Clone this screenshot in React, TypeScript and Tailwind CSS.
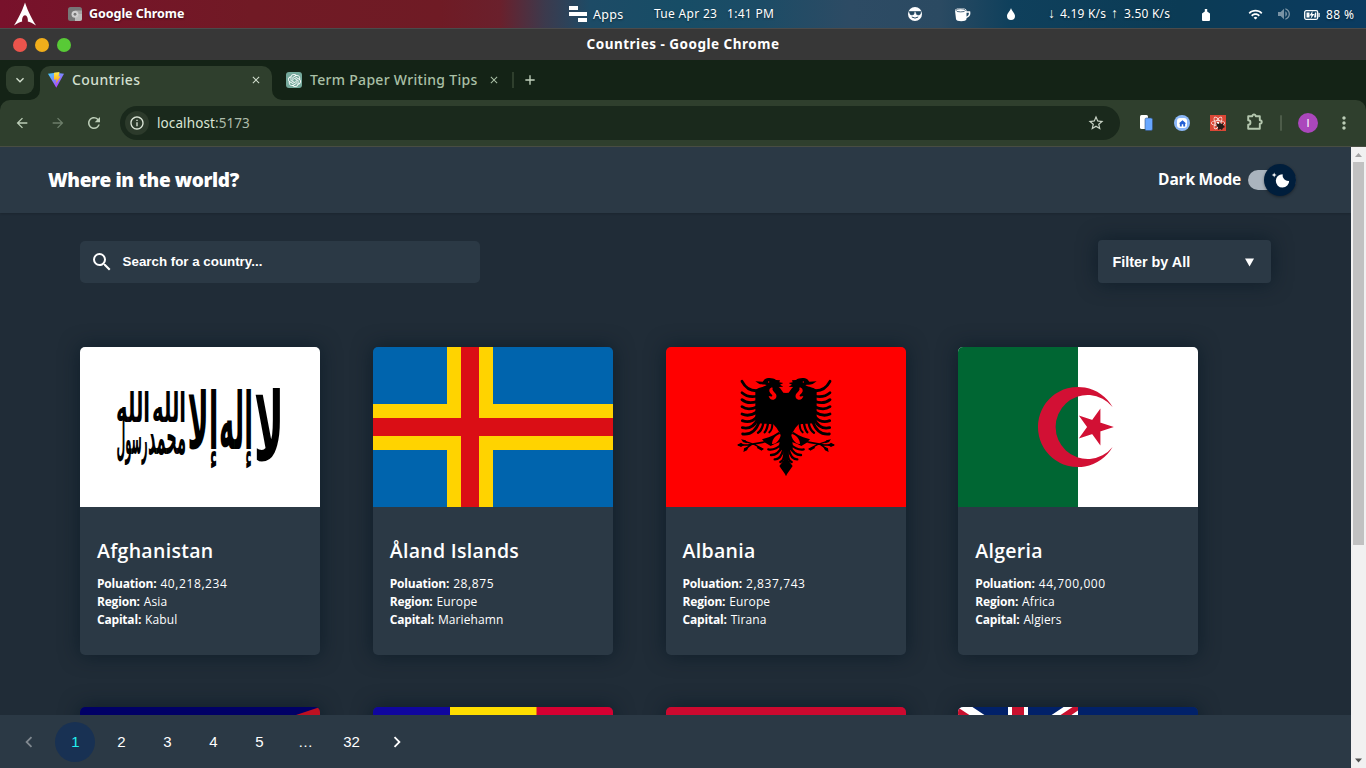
import type { ReactNode } from "react";
import {
  MdArrowBack,
  MdArrowForward,
  MdRefresh,
  MdStarBorder,
  MdMoreVert,
  MdSearch,
  MdNavigateBefore,
  MdNavigateNext,
  MdOutlineInfo,
  MdClose,
  MdAdd,
  MdKeyboardArrowDown,
  MdVolumeUp,
  MdWifi,
  MdHome,
} from "react-icons/md";
import { SiOpenai, SiReact } from "react-icons/si";

const ui = "font-['Noto_Sans',sans-serif]";
const nunito = "font-['Open_Sans',sans-serif]";

function SystemBar() {
  return (
    <div
      className={`${ui} flex h-7 shrink-0 items-center whitespace-nowrap bg-[linear-gradient(90deg,#78112b_0px,#711a25_250px,#6f1b25_440px,#6a202c_500px,#3c3a4d_545px,#1d4b66_590px,#174d66_680px,#1c4c66_760px,#2d4b64_850px,#2b4a62_940px,#0f405c_1010px,#0b3b55_1180px,#0b3b60_1366px)] text-[12.5px] text-white [text-shadow:0_1px_2px_rgba(0,0,0,0.5)]`}
    >
      <svg className="ml-[13px] h-6 w-6" viewBox="0 0 24 24" fill="#fff">
        <path d="M12 .5c-1.6 5-5 13.500-11 23 3.500-2.200 6-3.700 8.200-4.100-.4-3 .8-6.200 2.800-6.200s3.200 3.200 2.800 6.200c2.200.4 4.700 1.900 8.200 4.100C17 14 13.600 5.500 12 .5z" />
      </svg>
      <svg className="ml-[31px] h-[14px] w-[14px]" viewBox="0 0 14 14">
        <rect width="14" height="14" rx="2.500" fill="#777" />
        <path d="M7 7h7v4.500a2.500 2.500 0 0 1-2.500 2.500H7z" fill="#bbb" />
        <path d="M7 3.500h7V7H9z" fill="#a5a5a5" />
        <circle cx="7" cy="7.200" r="3.500" fill="#ccc" />
        <circle cx="7" cy="7.200" r="2" fill="#777" stroke="#eee" strokeWidth=".7" />
      </svg>
      <span className="ml-[7px] w-[480px] pt-px text-[12.500px] font-bold tracking-[-0.05px]">Google Chrome</span>
      <svg className="h-4 w-[18px]" viewBox="0 0 18 16" fill="#fff">
        <path d="M0 0h9v4H0zM0 6h18v4H0zM9 12h9v4H9z" />
      </svg>
      <span className="ml-[6px] w-[61px] pt-[2px] tracking-[0.3px]">Apps</span>
      <span className="w-[73px] text-[12px] tracking-[0.3px]">Tue Apr 23</span>
      <span className="w-[181px] text-[12px] tracking-[0.3px]">1:41 PM</span>
      <svg className="h-[14px] w-[14px]" viewBox="0 0 14 14">
        <circle cx="7" cy="7" r="7" fill="#fff" />
        <path d="M.5 4.500h13M1.500 5h4.600v1.200a2 1.600 0 0 1-4.300 0zM7.900 5h4.600v1.200a2 1.600 0 0 1-4.300 0z" fill="#244760" stroke="#244760" strokeWidth=".7" />
        <path d="M3.800 10q3.200 2.200 6.400 0" stroke="#244760" fill="none" />
      </svg>
      <svg className="ml-[32px] mt-px h-[15px] w-[17px]" viewBox="0 0 17 15">
        <path d="M1 3.500C1 0 12.500 0 12.500 3.500V12c0 3-10.500 3-10.500 0z" fill="#fff" />
        <ellipse cx="6.700" cy="3.300" rx="4.700" ry="1.600" fill="#fff" stroke="#24455e" strokeWidth=".8" />
        <path d="M12 5h3.500q.8 4-3.500 5.500" fill="none" stroke="#fff" strokeWidth="1.500" />
      </svg>
      <svg className="ml-[36px] h-3 w-2" viewBox="0 0 8 12">
        <path d="M4 0C4.500 3 8 5 8 8a4 4 0 0 1-8 0C0 5 3.500 3 4 0z" fill="#fff" />
      </svg>
      <span className="ml-[33px] flex w-[154px] text-[12px]">
        <span className="w-[12px] text-[14px] leading-4">↓</span>
        <span className="w-[51px] tracking-[0.2px]">4.19 K/s</span>
        <span className="w-[13px] text-[14px] leading-4">↑</span>
        <span className="tracking-[0.2px]">3.50 K/s</span>
      </span>
      <svg className="mt-px h-3 w-2" viewBox="0 0 8 12">
        <path d="M2.800 0h2.400v2.500L8 4.500V11q0 1-1 1H1q-1 0-1-1V4.500l2.800-2z" fill="#fff" />
      </svg>
      <MdWifi className="ml-[38px] mt-px h-[15px] w-[15px]" />
      <MdVolumeUp className="ml-[13px] h-4 w-4 opacity-45" />
      <svg className="ml-[12px] mt-px h-3 w-4" viewBox="0 0 16 12">
        <rect x=".7" y="1.700" width="13" height="8.600" rx="1.500" fill="none" stroke="#fff" strokeWidth="1.300" />
        <path d="M14.500 4h1.200v4h-1.200zM2.500 3.500h3v5h-3zM8.500 2 5.500 6.500h2L6.500 10l4-5H8.300zM11 3.500h1.300v5H10z" fill="#fff" />
      </svg>
      <span className="ml-[6px] pt-px text-[12px] tracking-[0.4px]">88 %</span>
    </div>
  );
}

function TitleBar() {
  return (
    <div className={`${ui} grid h-8 shrink-0 grid-cols-[1fr_auto_1fr] items-center border-t border-[#4b4b4b] bg-[#373737] px-[13px] text-white`}>
      <div className="flex gap-2">
        <span className="h-[14px] w-[14px] rounded-full bg-[#ec544c]" />
        <span className="h-[14px] w-[14px] rounded-full bg-[#f1ae1b]" />
        <span className="h-[14px] w-[14px] rounded-full bg-[#58ca36]" />
      </div>
      <span className="text-[13.500px] font-bold tracking-[0.5px]">Countries - Google Chrome</span>
      <span />
    </div>
  );
}

function TabStrip() {
  return (
    <div className={`${ui} flex h-10 shrink-0 bg-[#142316] text-[14px] font-medium text-[#d2dfce]`}>
      <div className="ml-[6px] mt-[6px] flex h-7 w-7 items-center justify-center rounded-[9px] bg-[#2f3f2d]">
        <MdKeyboardArrowDown className="h-4 w-4" />
      </div>
      <svg className="ml-[-4px] mt-[30px] h-[10px] w-[10px]" viewBox="0 0 10 10">
        <path d="M0 10A10 10 0 0 0 10 0v10z" fill="#2f3f2d" />
      </svg>
      <div className="mt-[6px] flex h-[34px] w-[232px] items-start rounded-t-[10px] bg-[#2f3f2d] pl-2 pr-[10px] pt-[6px]">
        <svg className="h-4 w-4" viewBox="0 0 16 16">
          <defs>
            <linearGradient id="viteV" x1="0" y1="0" x2=".7" y2="1">
              <stop stopColor="#41d1ff" />
              <stop offset="1" stopColor="#bd34fe" />
            </linearGradient>
            <linearGradient id="viteBolt" x1="0" y1="0" x2="0" y2="1">
              <stop stopColor="#ffea4f" />
              <stop offset="1" stopColor="#ff9c00" />
            </linearGradient>
          </defs>
          <path d="M0 1.800 8 .8l8 1L8.300 15.800z" fill="url(#viteV)" />
          <path d="m6 .8 5.500-.8-1 4.500 2-.3L8 11.500l.7-4.300-2.700.6z" fill="url(#viteBolt)" />
        </svg>
        <span className="ml-2 grow leading-4 tracking-[0.4px]">Countries</span>
        <MdClose className="mt-[2px] h-3 w-3" />
      </div>
      <svg className="mt-[30px] h-[10px] w-[10px]" viewBox="0 0 10 10">
        <path d="M0 0v10h10A10 10 0 0 1 0 0z" fill="#2f3f2d" />
      </svg>
      <div className="ml-1 mt-3 flex h-4 w-[229px] text-[#aac0a6]">
        <span className="flex h-4 w-4 items-center justify-center rounded-[3px] bg-[#75a99c] text-white">
          <SiOpenai className="h-[13px] w-[13px]" />
        </span>
        <span className="ml-2 w-[178px] whitespace-nowrap leading-4 tracking-[0.3px]">Term Paper Writing Tips</span>
        <MdClose className="mt-[2px] h-3 w-3" />
        <span className="ml-3 h-4 w-[2px] shrink-0 bg-[#2f3f2d]" />
      </div>
      <MdAdd className="ml-[7px] mt-[12px] h-4 w-4 text-[#c2d2be]" />
    </div>
  );
}

function Toolbar() {
  return (
    <div className="shrink-0 bg-[#142316]">
      <div className={`${ui} flex h-[47px] items-start rounded-t-[10px] border-b border-[#494e43] bg-[#2f3f2d] pt-[6px] text-[#bccdb7]`}>
        <MdArrowBack className="ml-[14px] mt-[9px] h-4 w-4" />
        <MdArrowForward className="ml-5 mt-[9px] h-4 w-4 text-[#6d7e6a]" />
        <MdRefresh className="ml-[19px] mt-[8px] h-[18px] w-[18px]" />
        <div className="ml-[17px] flex h-[34px] w-[1000px] items-center rounded-full bg-[#1a291c] pl-[5px] pr-[15px]">
          <span className="flex h-6 w-6 items-center justify-center rounded-full bg-[#2c3a2b] text-[#dce6d8]">
            <MdOutlineInfo className="h-4 w-4" />
          </span>
          <span className="ml-2 grow text-[13.500px] tracking-[0.1px] text-[#d9e5d5]">
            localhost<span className="text-[#aebcaa]">:5173</span>
          </span>
          <MdStarBorder className="h-[18px] w-[18px] text-[#cad5c7]" />
        </div>
        <svg className="ml-[19px] mt-[9px] h-4 w-4" viewBox="0 0 16 16">
          <rect x="1" y="0" width="8" height="14" rx="1.500" fill="#fff" />
          <rect x="6" y="3" width="7.500" height="12.500" rx="1.500" fill="#67a7ff" stroke="#34507d" strokeWidth=".6" />
        </svg>
        <span className="ml-[19px] mt-[9px] flex h-4 w-4 items-center justify-center rounded-full border-[3px] border-dotted border-[#8cb8f8] bg-[#8cb8f8]">
          <span className="flex h-[10px] w-[10px] shrink-0 items-center justify-center rounded-[3px] bg-white text-[#2360d5]">
            <MdHome className="h-[9px] w-[9px]" />
          </span>
        </span>
        <span className="relative ml-5 mt-[9px] flex h-4 w-4 items-center justify-center bg-[#db4736] text-white">
          <SiReact className="h-[14px] w-[14px]" />
          <svg className="absolute left-[6px] top-[6px] h-[9px] w-[9px]" viewBox="0 0 9 9">
            <path d="M0 2l3 1 1-2 1 2 3-1-1 2 2 2-2 1-1 2-2-1-2 1V6L0 5l1-1z" fill="#251b18" />
          </svg>
        </span>
        <svg className="ml-[19px] mt-[6px] h-5 w-5" viewBox="0 0 20 20" fill="none" stroke="#b4c7ae" strokeWidth="1.900">
          <path d="M3.200 4.200h4.100c-.2-2.200 3.600-2.200 3.400 0h4.100v4c2.600-.1 2.600 3.700 0 3.600v5H3.200v-4c3-.1 3-4.500 0-4.600z" strokeLinejoin="round" />
        </svg>
        <span className="ml-[15px] mt-[9px] h-4 w-[2px] rounded bg-[#4d5c49]" />
        <span className="ml-[16px] mt-[7px] flex h-5 w-5 items-center justify-center rounded-full bg-[#ab47bc] font-['Liberation_Sans',sans-serif] text-[11px] text-white">I</span>
        <MdMoreVert className="ml-[16px] mt-[7px] h-5 w-5" />
      </div>
    </div>
  );
}

type Brush = { word: string; x: number; y: number; width: number; size: number; stretch: number };

const calligraphy: Brush[] = [
  { word: "لا", x: 189, y: 113, width: 30, size: 28, stretch: 3.4 },
  { word: "إله", x: 156, y: 102, width: 34, size: 28, stretch: 2.8 },
  { word: "إلا", x: 123, y: 102, width: 31, size: 28, stretch: 2.8 },
  { word: "الله", x: 89, y: 75, width: 34, size: 23, stretch: 1.8 },
  { word: "محمد", x: 87, y: 107, width: 38, size: 27, stretch: 1.8 },
  { word: "رسول", x: 52, y: 107, width: 31, size: 25, stretch: 1.8 },
  { word: "الله", x: 53, y: 75, width: 34, size: 23, stretch: 1.8 },
];

function AfghanFlag() {
  return (
    <svg className="h-40 w-60" viewBox="0 0 240 160">
      <rect width="240" height="160" fill="#fff" />
      {calligraphy.map(({ word, x, y, width, size, stretch }, i) => (
        <g key={i} transform={`translate(${x} ${y}) scale(1 ${stretch})`}>
          <text
            textAnchor="middle"
            direction="rtl"
            fontFamily="'DejaVu Sans', sans-serif"
            fontSize={size}
            fontWeight="bold"
            textLength={width}
            lengthAdjust="spacingAndGlyphs"
          >
            {word}
          </text>
        </g>
      ))}
    </svg>
  );
}

function AlandFlag() {
  return (
    <svg className="h-40 w-60" viewBox="0 0 240 160">
      <rect width="240" height="160" fill="#0064ad" />
      <path d="M74 0h46v57h120v46H120v57H74v-57H0V57h74z" fill="#ffd300" />
      <path d="M88 0h18v71h134v18H106v71H88V89H0V71h88z" fill="#da0e15" />
    </svg>
  );
}

function EagleHalf() {
  return (
    <g>
      <path
        d="M199 99L190 98 180 84 176 81 190 80 180 74 190 69 178 67 180 61 168 60C160 53 142 52 134 58L128 65 106 64 118 72C126 75 134 73 140 75C136 80 120 81 112 86L106 90V180L112 190 160 193 170 204 182 224C180 240 176 256 178 266L190 272 192 300 178 318 199 348z"
        fill="#000"
      />
      <path d="M126 238L146 232 160 226 176 216 186 228 180 246 164 252 152 258 136 248z" fill="#000" />
      <path d="M180 222C168 224 156 238 156 252C168 254 180 238 182 226z" fill="#f00" />
      <path d="M156 82C150 84 147 89 148 94C150 101 158 104 157 108C155 111 150 109 146 108C148 116 154 121 161 119C169 117 171 109 168 103C164 96 155 92 158 84z" fill="#f00" />
      <circle cx="146" cy="66" r="2" fill="#f00" />
      <g fill="none" stroke="#000" strokeLinecap="round" strokeWidth="8.500">
        <path d="M112 92Q82 94 66 64" />
        <path d="M112 108Q84 114 66 98" strokeWidth="8" />
        <path d="M112 124Q84 134 66 119" />
        <path d="M112 140Q85 153 66 140" />
        <path d="M112 155Q88 172 66 162" />
        <path d="M112 169Q92 192 67 182" />
        <path d="M112 180Q96 210 67 203" />
        <path d="M118 184Q104 226 68 222" />
        <path d="M130 190Q126 211 114 218" strokeWidth="7" />
        <path d="M144 190Q141 209 134 217" strokeWidth="7" />
        <path d="M157 192Q157 209 148 217" strokeWidth="6" />
        <path d="M186 252Q164 272 145 268" strokeWidth="7" />
        <path d="M187 260Q173 286 153 285" strokeWidth="7" />
        <path d="M190 268Q183 299 164 298" strokeWidth="7" />
        <path d="M194 274Q192 304 181 306" strokeWidth="7" />
      </g>
      <path d="M140 244L98 252l-26 17M130 268L104 254 68 242M54 255h30l52-9" fill="none" stroke="#000" strokeWidth="4" />
      <path d="M63 238l14 3 5 9-12-3zM51 255l12-7 10 7-10 6zM70 276l3-12 13-3-5 10zM113 258l17 8-5 6-14-8z" fill="#000" />
    </g>
  );
}

function AlbaniaFlag() {
  return (
    <svg className="h-40 w-60" viewBox="0 0 240 160">
      <rect width="240" height="160" fill="#f00" />
      <g transform="translate(54 13) scale(.33333)">
        <EagleHalf />
        <g transform="translate(396 0) scale(-1 1)">
          <EagleHalf />
        </g>
      </g>
    </svg>
  );
}

function AlgeriaFlag() {
  return (
    <svg className="h-40 w-60" viewBox="0 0 240 160">
      <rect width="240" height="160" fill="#fff" />
      <path d="M0 0h120v160H0z" fill="#063" />
      <path
        d="M154.600 60A40 40 0 1 0 154.600 100A32 32 0 1 1 154.600 60zM155.800 80l-35-11.400 21.600 29.800V61.600l-21.600 29.800z"
        fill="#d21034"
      />
    </svg>
  );
}

type Country = { name: string; population: string; region: string; capital: string; flag: ReactNode };

const countries: Country[] = [
  { name: "Afghanistan", population: "40,218,234", region: "Asia", capital: "Kabul", flag: <AfghanFlag /> },
  { name: "Åland Islands", population: "28,875", region: "Europe", capital: "Mariehamn", flag: <AlandFlag /> },
  { name: "Albania", population: "2,837,743", region: "Europe", capital: "Tirana", flag: <AlbaniaFlag /> },
  { name: "Algeria", population: "44,700,000", region: "Africa", capital: "Algiers", flag: <AlgeriaFlag /> },
];

const nextFlags: ReactNode[] = [
  <svg className="h-40 w-60" viewBox="0 0 240 160">
    <rect width="240" height="160" fill="#006" />
    <path d="M240 0v160H0V80z" fill="#bd1021" />
  </svg>,
  <svg className="h-40 w-60" viewBox="0 0 240 160">
    <rect width="77" height="160" fill="#10069f" />
    <rect x="77" width="87" height="160" fill="#fedd00" />
    <rect x="163.500" width="77" height="160" fill="#d50032" />
  </svg>,
  <svg className="h-40 w-60" viewBox="0 0 240 160">
    <rect width="240" height="160" fill="#cc092f" />
    <rect y="80" width="240" height="80" />
  </svg>,
  <svg className="h-40 w-60" viewBox="0 0 240 160">
    <rect width="240" height="160" fill="#012169" />
    <svg width="120" height="80" viewBox="0 0 120 80">
      <path d="M0 0l120 80M120 0L0 80" stroke="#fff" strokeWidth="16" />
      <path d="M-3 2l63 42M120 0L60 40" stroke="#c8102e" strokeWidth="6" />
      <path d="M60 0v80M0 40h120" stroke="#fff" strokeWidth="20" />
      <path d="M60 0v80M0 40h120" stroke="#c8102e" strokeWidth="12" />
    </svg>
  </svg>,
];

const cardShadow = "shadow-[0_0_20px_rgba(5,22,34,0.65)]";

function Fact({ label, value, numeric }: { label: string; value: string; numeric?: boolean }) {
  return (
    <p className="text-[12px] leading-[18px]">
      <b className="mr-1 font-bold tracking-[-0.2px]">{label}:</b>
      <span className={numeric ? "tracking-[0.6px]" : "tracking-[0.1px]"}>{value}</span>
    </p>
  );
}

function CountryCard({ name, population, region, capital, flag }: Country) {
  return (
    <article className={`${nunito} ${cardShadow} h-[308px] w-60 overflow-hidden rounded-[5px] bg-[#2b3945] text-white`}>
      {flag}
      <div className="px-[17px] pt-[29px]">
        <h2 className="mb-[10px] text-[19.500px] font-semibold leading-[29px] tracking-[0.3px]">{name}</h2>
        <Fact label="Poluation" value={population} numeric />
        <Fact label="Region" value={region} />
        <Fact label="Capital" value={capital} />
      </div>
    </article>
  );
}

function Header() {
  return (
    <header className={`${nunito} flex h-[66px] shrink-0 items-center justify-between bg-[#2b3945] pl-12 pr-[55px] text-white shadow-[0_1px_2px_rgba(0,0,0,0.15)]`}>
      <h1 className="text-[19px] font-extrabold tracking-[-0.38px]">Where in the world?</h1>
      <div className="flex items-center">
        <span className="mr-[7px] pb-px text-[15.500px] font-bold tracking-[-0.2px]">Dark Mode</span>
        <span className="flex h-5 w-12 items-center justify-end rounded-full bg-[#aab4be]">
          <span className="flex h-8 w-8 shrink-0 items-center justify-center rounded-full bg-[#001e3c] shadow-[0_1px_3px_rgba(0,0,0,0.4)]">
            <svg className="h-5 w-5" viewBox="0 0 20 20" fill="#fff">
              <path d="M4.200 2.500l-.7 1.800-1.800.7 1.800.7.700 1.800.600-1.800L6.700 5l-1.900-.7-.6-1.800zm15 8.300a6.700 6.700 0 1 1-6.600-6.600 5.800 5.800 0 0 0 6.600 6.600z" />
            </svg>
          </span>
        </span>
      </div>
    </header>
  );
}

function Filters() {
  return (
    <div className="flex h-[43px] items-end justify-between pr-20 font-['Liberation_Sans',sans-serif] font-bold text-white">
      <div className="flex h-[42px] w-[400px] items-center rounded-[5px] bg-[#2b3945] pl-[10px]">
        <MdSearch className="h-6 w-6" />
        <span className="ml-[8.600px] text-[13.330px]">Search for a country...</span>
      </div>
      <div className={`${cardShadow} flex h-[43px] w-[173px] items-center justify-between rounded-[4px] bg-[#2b3945] pl-[14.400px] pr-[17px]`}>
        <span className="pt-[2px] text-[14.400px]">Filter by All</span>
        <svg className="mt-[2px] h-[9px] w-[9px]" viewBox="0 0 9 9" fill="#fff">
          <path d="M0 .5h9l-4.500 8z" />
        </svg>
      </div>
    </div>
  );
}

const pages = ["1", "2", "3", "4", "5", "…", "32"];

function Pagination() {
  return (
    <nav className="flex h-[53px] shrink-0 items-center gap-[6px] bg-[#2b3945] pl-[9px] font-['Liberation_Sans',sans-serif] text-[15px] text-white">
      <span className="flex h-10 w-10 items-center justify-center">
        <MdNavigateBefore className="h-[22px] w-[22px] opacity-40" />
      </span>
      {pages.map((page) => (
        <span
          key={page}
          className={`flex h-10 w-10 items-center justify-center rounded-full pl-px pt-[2px] ${page === "1" ? "bg-[#183153] text-[#22f0f0]" : ""}`}
        >
          {page}
        </span>
      ))}
      <span className="flex h-10 w-10 items-center justify-center">
        <MdNavigateNext className="h-[22px] w-[22px]" />
      </span>
    </nav>
  );
}

function Scrollbar() {
  return (
    <div className="flex w-[15px] shrink-0 flex-col items-center bg-[#f1f1f1]">
      <svg className="h-[15px] w-[15px] shrink-0" viewBox="0 0 15 15">
        <path d="M4 10h7L7.500 6z" fill="#a3a3a3" />
      </svg>
      <div className="h-[383px] w-[11px] bg-[#c1c1c1]" />
      <svg className="mt-auto h-[15px] w-[15px] shrink-0" viewBox="0 0 15 15">
        <path d="M4 5.500h7L7.500 9.500z" fill="#505050" />
      </svg>
    </div>
  );
}

export default function App() {
  return (
    <div className="flex h-[768px] w-[1366px] flex-col overflow-hidden">
      <SystemBar />
      <TitleBar />
      <TabStrip />
      <Toolbar />
      <div className="flex min-h-0 grow">
        <div className="flex min-w-0 grow flex-col bg-[#202c37]">
          <Header />
          <main className="min-h-0 grow overflow-hidden pl-20 pt-[27px]">
            <Filters />
            <div className="mt-16 grid grid-cols-[repeat(4,240px)] gap-x-[52.770px] gap-y-[52px]">
              {countries.map((country) => (
                <CountryCard key={country.name} {...country} />
              ))}
              {nextFlags.map((flag, i) => (
                <div key={i} className={`${cardShadow} h-[308px] w-60 overflow-hidden rounded-[5px] bg-[#2b3945]`}>
                  {flag}
                </div>
              ))}
            </div>
          </main>
          <Pagination />
        </div>
        <Scrollbar />
      </div>
    </div>
  );
}
